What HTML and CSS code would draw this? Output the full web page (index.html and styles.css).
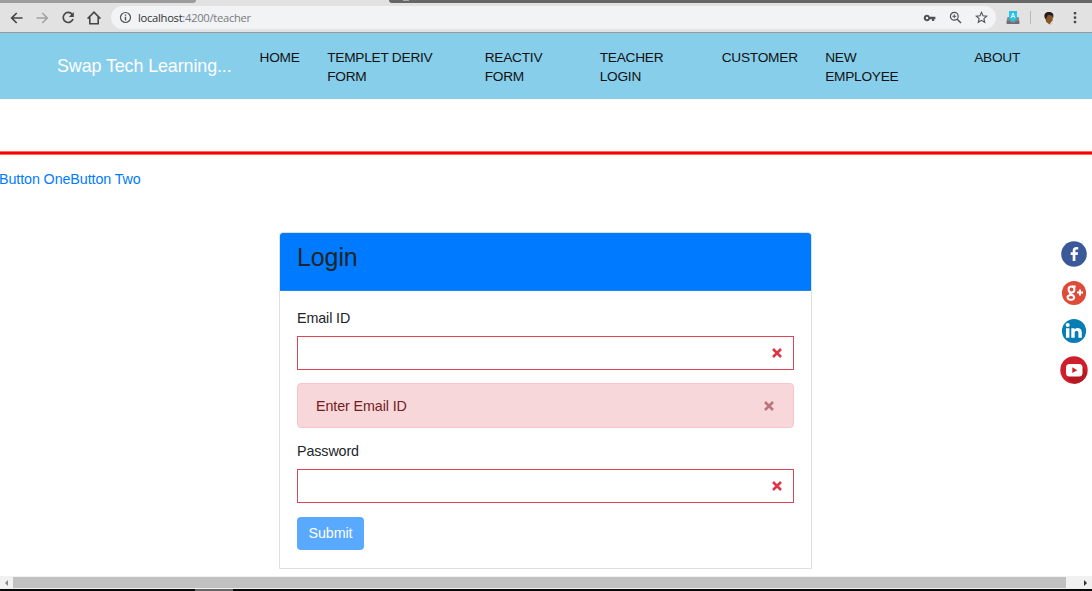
FILE: index.html
```html
<!DOCTYPE html>
<html lang="en">
<head>
<meta charset="utf-8">
<title>Teacher Login</title>
<link rel="stylesheet" href="styles.css">
</head>
<body>
<div class="tabs"><span class="tab tab-left"></span><span class="tab tab-active"></span><span class="tab tab-right"><i class="tab-icon"></i></span></div>
<header class="toolbar">
  <div class="nav-buttons">
    <svg width="16" height="16" viewBox="0 0 16 16" fill="none" stroke="#454648" stroke-width="1.7"><path d="M13.500 8H3M7.700 3 2.700 8l5 5"/></svg>
    <svg width="16" height="16" viewBox="0 0 16 16" fill="none" stroke="#a0a1a3" stroke-width="1.5"><path d="M1.500 8H12M7.300 3l5 5-5 5"/></svg>
    <svg width="16" height="16" viewBox="0 0 16 16" fill="none" stroke="#454648" stroke-width="1.7"><path d="M12.2 4.4A5 5 0 1 0 13 9"/><path d="M13.8 2v5H8.8z" fill="#454648" stroke="none"/></svg>
    <svg width="16" height="16" viewBox="0 0 16 16" fill="none" stroke="#454648" stroke-width="1.6"><path d="M1.6 8.6 8 2.2l6.4 6.4M3.8 7v6.7h8.4V7"/></svg>
  </div>
  <div class="address">
    <svg width="13" height="13" viewBox="0 0 13 13" fill="none" stroke="#505255" stroke-width="1.2"><circle cx="6.5" cy="6.5" r="5"/><path d="M6.5 5.8v3.6M6.5 3.5v1.3" stroke-width="1.4"/></svg>
    <span class="url">localhost<span class="url-path">:4200/teacher</span></span>
    <svg class="key" width="13" height="12" viewBox="0 0 13 12"><path d="M4 2.8a3.2 3.2 0 1 0 2.9 4.5H9v1.8h2.2V7.3h1.2V4.8H6.9A3.2 3.2 0 0 0 4 2.8zm0 2a1.2 1.2 0 1 1 0 2.4 1.2 1.2 0 0 1 0-2.4z" fill="#505255" fill-rule="evenodd"/></svg>
    <svg class="magnifier" width="13" height="13" viewBox="0 0 13 13" fill="none" stroke="#505255" stroke-width="1.2"><circle cx="5.3" cy="5.3" r="3.9"/><path d="M8.2 8.2 12 12" stroke-width="1.5"/><path d="M3.4 5.3h3.8M5.3 3.4v3.8" stroke-width="1"/></svg>
    <svg class="star" width="13" height="13" viewBox="0 0 13 13" fill="none" stroke="#505255" stroke-width="1.1"><path d="m6.5 1.4 1.5 3.4 3.7.3-2.8 2.5.8 3.7-3.2-2-3.2 2 .8-3.7-2.8-2.5 3.7-.3z"/></svg>
  </div>
  <svg class="extension" width="14" height="14" viewBox="0 0 14 14"><path d="M1.5 6h11l1 4v3H.5v-3z" fill="#85888b"/><path d="M1 10h3l1 1.4h4L10 10h3v3H1z" fill="#6b6e72"/><path d="M3 0h8v7.5L7 11 3 7.5z" fill="#25c5e8"/><path d="M5 7 7 2l2 5M5.8 5.4h2.4" fill="none" stroke="#e8fbff" stroke-width="1"/></svg>
  <span class="divider"></span>
  <svg class="avatar" width="18" height="18" viewBox="0 0 18 18"><circle cx="9" cy="9" r="8" fill="#e6e4e3"/><path d="M5.5 6.5h7.5l-.4 5-2.3 2.8-.5 1.5-3.8-3z" fill="#8a5527"/><path d="M4.6 8.5C3.5 4.5 6.4 3 9 3.1c3.4-.1 5.4 2 4 6.2l-.8-2.5-4.4-.4-1.3 2.5-.3 2z" fill="#241d1b"/><path d="m9 15.5 3.8-2.2-.2 1.7-3 1.2z" fill="#c9ced5"/></svg>
  <svg width="4" height="14" viewBox="0 0 4 14" fill="#454648"><rect x=".8" y="1" width="2.4" height="2.4"/><rect x=".8" y="5.4" width="2.4" height="2.4"/><rect x=".8" y="9.8" width="2.4" height="2.4"/></svg>
</header>
<nav class="navbar">
  <a class="brand">Swap Tech Learning...</a>
  <a>HOME</a><a>TEMPLET DERIV<br>FORM</a><a>REACTIV<br>FORM</a><a>TEACHER<br>LOGIN</a><a>CUSTOMER</a><a>NEW<br>EMPLOYEE</a><a>ABOUT</a>
</nav>
<main class="page">
  <div class="rule"></div>
  <div class="links"><a>Button One</a><a>Button Two</a></div>
  <section class="card">
    <div class="card-header"><h1>Login</h1></div>
    <form class="card-body">
      <label>Email ID</label>
      <div class="field"><svg width="12" height="12" viewBox="0 0 12 12"><path d="m2 2 8 8M10 2 2 10" stroke="#dc3545" stroke-width="2.500"/></svg></div>
      <div class="alert"><span>Enter Email ID</span><svg width="12" height="12" viewBox="0 0 12 12"><path d="m2 2 8 8M10 2 2 10" stroke="#b9757e" stroke-width="2.500"/></svg></div>
      <label>Password</label>
      <div class="field"><svg width="12" height="12" viewBox="0 0 12 12"><path d="m2 2 8 8M10 2 2 10" stroke="#dc3545" stroke-width="2.500"/></svg></div>
      <button type="button" class="submit">Submit</button>
    </form>
  </section>
</main>
<aside class="social">
  <svg width="28" height="28" viewBox="0 0 28 28"><circle cx="14" cy="14" r="12.8" fill="#3b5998"/><path d="M15.4 21v-6.1h2.3l.4-2.6h-2.7v-1.4c0-.9.4-1.4 1.4-1.4h1.4V7.2c-3.6-.6-5.5.5-5.5 3.4v1.7h-2v2.6h2V21z" fill="#fff"/></svg>
  <svg width="28" height="28" viewBox="0 0 28 28"><circle cx="14" cy="14" r="12.1" fill="#dd4b39"/><g fill="none" stroke="#fff" stroke-width="2"><ellipse cx="11.500" cy="10.500" rx="2.900" ry="3"/><path d="M10.500 13.500c-1.500 1.200 1 1.800 2.600 3.100 2.700 2.200-.1 4.400-2.600 4.200-3.500-.2-4-3.900-.8-4.500l2-.3M12 7.500h3.700M17 13.500h6M20 10.500v6"/></g></svg>
  <svg width="28" height="28" viewBox="0 0 28 28"><circle cx="14" cy="14" r="12.1" fill="#087cb5"/><g fill="#fff"><circle cx="7.700" cy="8" r="2"/><path d="M6 11.200h3.400v9.500H6zM11.300 11.200h3.200v1.300c2.200-2.700 7.300-1.800 7.300 2.800v5.400h-3.400v-4.900c0-2.900-3.700-2.700-3.700 0v4.900h-3.400z"/></g></svg>
  <svg width="28" height="28" viewBox="0 0 28 28"><circle cx="14" cy="14" r="13.7" fill="#ce1f2a"/><path d="M7 23.500 21.500 9.500l5.700 7.800A13.700 13.700 0 0 1 14 27.700z" fill="#b71924"/><rect x="6" y="8" width="16.500" height="12.500" rx="3.500" fill="#fff"/><path d="m12.300 11.300 5 2.900-5 2.900z" fill="#ce1f2a"/></svg>
</aside>
<div class="scrollbar"><span class="arrow arrow-left"></span><span class="thumb"></span><span class="arrow arrow-right"></span></div>
<footer class="taskbar"><span></span></footer>
</body>
</html>
```
FILE: styles.css
```css
* { box-sizing: border-box; }
body { margin: 0; width: 1092px; height: 591px; overflow: hidden; display: flex; flex-direction: column; background: #fff; color: #212529; font: 14.300px/21px "Liberation Sans", Arial, sans-serif; letter-spacing: -.1px; }
svg { display: block; flex: none; }
.tabs { height: 3px; flex: none; display: flex; background: #e1e1e1; }
.tab-left { width: 196px; background: #9d9d9d; border-bottom-right-radius: 3px; }
.tab-active { width: 193px; }
.tab-right { flex: 1; background: #666; border-bottom-left-radius: 3px; padding-left: 14px; }
.tab-icon { display: block; width: 6px; height: 1px; background: #aaa; }
.toolbar { height: 30px; flex: none; display: flex; align-items: center; background: #e2e2e2; border-bottom: 1px solid #9e9898; padding: 0 15px 0 9px; }
.nav-buttons { display: flex; gap: 9.700px; width: 102px; flex: none; }
.address { width: 885px; flex: none; height: 23px; border-radius: 12px; background: #f1f3f4; display: flex; align-items: center; padding: 0 8px; }
.url { margin-left: 6px; flex: 1; font: 11.200px/20px "Open Sans", "Noto Sans", sans-serif; letter-spacing: -.28px; color: #303236; }
.url-path { color: #777b80; }
.magnifier { margin-left: 13px; }
.star { margin-left: 13px; }
.extension { margin-left: 10px; }
.divider { width: 1px; height: 13px; background: #b9b9b9; margin-left: 10px; }
.avatar { margin: 0 15px 0 9px; }
.navbar { height: 66px; flex: none; display: grid; grid-template-columns: 202.500px 67.700px 157.500px 115px 122px 103.500px 149px auto; padding: 15px 0 0 57px; background: #87ceeb; color: #111; font-size: 13.700px; letter-spacing: -.25px; line-height: 19px; }
.brand { color: #fff; font-size: 17.900px; letter-spacing: -.1px; line-height: 36px; }
.page { height: 477px; flex: none; padding-top: 52px; }
.rule { height: 4px; background: #f00; border: solid #f66; border-width: 1px 0; }
.links { display: flex; margin: 14px 0 0 -1px; color: #007bff; height: 21px; }
.card { width: 533px; height: 337px; margin: 42px 0 0 279px; border: 1px solid #dfdfdf; border-radius: 4px 4px 0 0; }
.card-header { height: 58px; border-radius: 3px 3px 0 0; background: #007bff; border-bottom: 1px solid #2385ee; padding: 10px 17px; }
h1 { margin: 0; font-size: 25px; letter-spacing: -.1px; line-height: 29px; font-weight: 400; }
.card-body { padding: 17px 17px 0; }
label { display: block; height: 28px; }
.field { height: 34px; border: 1px solid #dc4655; display: flex; align-items: center; justify-content: flex-end; padding-right: 10px; }
.alert { height: 45px; margin: 13px 0; border: 1px solid #f5c6cb; border-radius: 4px; background: #f8d7da; color: #721c24; display: flex; align-items: center; justify-content: space-between; padding: 1px 18px 0 18px; }
.submit { display: block; margin-top: 14px; width: 67px; height: 33px; padding: 0; border: 0; border-radius: 4px; background: #59a9ff; color: #fff; font: inherit; letter-spacing: inherit; }
.social { position: absolute; left: 1060px; top: 240px; display: flex; flex-direction: column; gap: 10.700px; }
.scrollbar { height: 13px; flex: none; display: flex; align-items: center; background: #f1f1f1; }
.thumb { width: 1053px; height: 11px; background: #c1c1c1; }
.arrow { width: 13px; display: flex; justify-content: center; }
.arrow::before { content: ""; border: 3px solid transparent; }
.arrow-left::before { border-left: 0; border-right-color: #888; }
.arrow-right { margin-left: 14px; width: 11px; }
.arrow-right::before { border-right: 0; border-left-color: #333; }
.taskbar { height: 2px; flex: none; background: #080808; display: flex; }
.taskbar span { width: 38px; margin-left: 195px; background: #666; }
```
